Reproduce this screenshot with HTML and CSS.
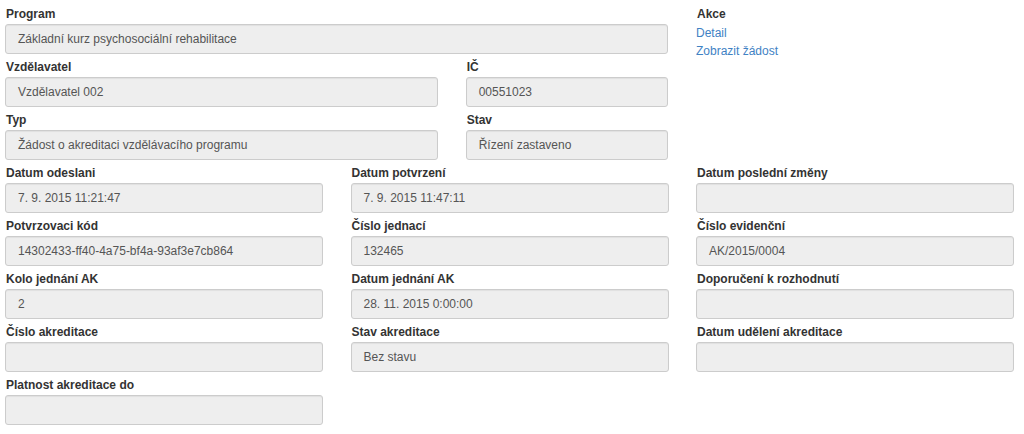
FILE: index.html
```html
<!DOCTYPE html>
<html lang="cs">
<head>
<meta charset="utf-8">
<title>Detail žádosti</title>
<link rel="stylesheet" href="styles.css">
</head>
<body>
<div class="page">
  <div class="grid">
    <div class="block span-2">
      <div class="field span-3">
        <label class="lbl">Program</label>
        <div class="ctl">Základní kurz psychosociální rehabilitace</div>
      </div>
      <div class="field span-2">
        <label class="lbl">Vzdělavatel</label>
        <div class="ctl">Vzdělavatel 002</div>
      </div>
      <div class="field">
        <label class="lbl">IČ</label>
        <div class="ctl">00551023</div>
      </div>
      <div class="field span-2">
        <label class="lbl">Typ</label>
        <div class="ctl">Žádost o akreditaci vzdělávacího programu</div>
      </div>
      <div class="field">
        <label class="lbl">Stav</label>
        <div class="ctl">Řízení zastaveno</div>
      </div>
    </div>
    <div class="actions">
      <div class="lbl">Akce</div>
      <a class="link" href="#">Detail</a>
      <a class="link" href="#">Zobrazit žádost</a>
    </div>

    <div class="field"><label class="lbl">Datum odeslani</label><div class="ctl">7. 9. 2015 11:21:47</div></div>
    <div class="field"><label class="lbl">Datum potvrzení</label><div class="ctl">7. 9. 2015 11:47:11</div></div>
    <div class="field"><label class="lbl">Datum poslední změny</label><div class="ctl"></div></div>

    <div class="field"><label class="lbl">Potvrzovaci kód</label><div class="ctl">14302433-ff40-4a75-bf4a-93af3e7cb864</div></div>
    <div class="field"><label class="lbl">Číslo jednací</label><div class="ctl">132465</div></div>
    <div class="field"><label class="lbl">Číslo evidenční</label><div class="ctl">AK/2015/0004</div></div>

    <div class="field"><label class="lbl">Kolo jednání AK</label><div class="ctl">2</div></div>
    <div class="field"><label class="lbl">Datum jednání AK</label><div class="ctl">28. 11. 2015 0:00:00</div></div>
    <div class="field"><label class="lbl">Doporučení k rozhodnutí</label><div class="ctl"></div></div>

    <div class="field"><label class="lbl">Číslo akreditace</label><div class="ctl"></div></div>
    <div class="field"><label class="lbl">Stav akreditace</label><div class="ctl">Bez stavu</div></div>
    <div class="field"><label class="lbl">Datum udělení akreditace</label><div class="ctl"></div></div>

    <div class="field"><label class="lbl">Platnost akreditace do</label><div class="ctl"></div></div>
  </div>
</div>
</body>
</html>
```
FILE: styles.css
```css
html, body {
  margin: 0;
  padding: 0;
  background: #fff;
}
body {
  font-family: "Liberation Sans", Arial, Helvetica, sans-serif;
  font-size: 12px;
  line-height: 18px;
  color: #333;
}
.page {
  padding: 5px 0 0 5px;
  width: 1009px;
}
.grid {
  display: grid;
  grid-template-columns: 1fr 1fr 1fr;
  column-gap: 27.5px;
}
.block {
  display: grid;
  grid-template-columns: 1fr 1fr 1fr;
  column-gap: 27.5px;
}
.span-2 { grid-column: span 2; }
.span-3 { grid-column: span 3; }
.field {
  margin-bottom: 4px;
}
.lbl {
  display: block;
  font-weight: bold;
  line-height: 18px;
  margin-bottom: 1px;
  padding-left: 1px;
}
.ctl {
  box-sizing: border-box;
  height: 30px;
  padding: 5px 12px;
  line-height: 18px;
  background: #eeeeee;
  border: 1px solid #cccccc;
  border-radius: 3px;
  box-shadow: inset 0 1px 1px rgba(0, 0, 0, 0.06);
  color: #555;
  white-space: nowrap;
  overflow: hidden;
}
.actions {
  display: flex;
  flex-direction: column;
  align-items: flex-start;
}
.link {
  color: #3f82c4;
  text-decoration: none;
  line-height: 18px;
}
```
